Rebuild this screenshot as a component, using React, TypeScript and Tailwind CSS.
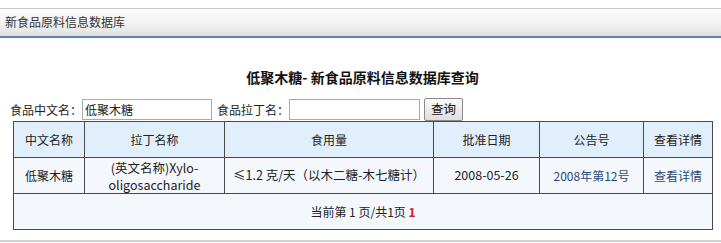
export default function App() {
    const font = { fontFamily: '"Noto Sans CJK SC", "Noto Sans", sans-serif' }

    return (
        <div className="w-[721px] h-[243px] bg-white text-[12px] text-[#222] overflow-hidden" style={font}>
            {/* Header bar */}
            <div className="pt-[8px]">
                <div className="border-t border-[#c8c8c8] h-[27px] bg-gradient-to-b from-[#fdfdfd] via-[#f4f4f4] to-[#e2e2e2] flex items-center pl-[5px] text-[#333]">
                    新食品原料信息数据库
                </div>
                <div className="h-[1px] bg-[#cfe0f2]" />
                <div className="h-[2px] bg-[#6284ab]" />
            </div>

            {/* Title */}
            <h1 className="mt-[31px] text-center font-bold text-[14px] leading-[16px] text-[#111] pl-[4px]">
                低聚木糖- 新食品原料信息数据库查询
            </h1>

            {/* Search form */}
            <div className="mt-[13px] flex items-center pl-[10px] h-[23px]">
                <span className="w-[72px] leading-none whitespace-nowrap">食品中文名：</span>
                <input
                    defaultValue="低聚木糖"
                    className="w-[130px] h-[21px] border border-[#a9a9a9] px-[2px] text-[12px] outline-none"
                    style={font}
                />
                <span className="ml-[5px] w-[72px] leading-none whitespace-nowrap">食品拉丁名：</span>
                <input
                    className="w-[131px] h-[21px] border border-[#a9a9a9] px-[2px] text-[12px] outline-none"
                    style={font}
                />
                <button
                    className="ml-[4px] w-[39px] h-[23px] border border-[#8a8a8a] rounded-[2px] bg-gradient-to-b from-[#fbfbfb] to-[#dedede] text-[12.5px] text-[#111] leading-none"
                    style={font}
                >
                    查询
                </button>
            </div>

            {/* Result table */}
            <div className="pl-[13px]">
                <table className="border-collapse border border-[#4a4a4a] text-center text-[#222]">
                    <colgroup>
                        <col className="w-[71px]" />
                        <col className="w-[140px]" />
                        <col className="w-[209px]" />
                        <col className="w-[106px]" />
                        <col className="w-[104px]" />
                        <col className="w-[69px]" />
                    </colgroup>
                    <thead>
                        <tr className="h-[36px] bg-[#e1eefb]">
                            <th className="border border-[#4a4a4a] font-normal">中文名称</th>
                            <th className="border border-[#4a4a4a] font-normal">拉丁名称</th>
                            <th className="border border-[#4a4a4a] font-normal">食用量</th>
                            <th className="border border-[#4a4a4a] font-normal">批准日期</th>
                            <th className="border border-[#4a4a4a] font-normal">公告号</th>
                            <th className="border border-[#4a4a4a] font-normal">查看详情</th>
                        </tr>
                    </thead>
                    <tbody>
                        <tr className="h-[36px] bg-[#f4f8fd]">
                            <td className="border border-[#4a4a4a]">低聚木糖</td>
                            <td className="border border-[#4a4a4a] leading-[17px] text-[12.5px] py-0">
                                (英文名称)Xylo-
                                <br />
                                oligosaccharide
                            </td>
                            <td className="border border-[#4a4a4a] text-[12.5px]">≤1.2 克/天（以木二糖-木七糖计）</td>
                            <td className="border border-[#4a4a4a] text-[12.5px]">2008-05-26</td>
                            <td className="border border-[#4a4a4a] text-[#2b4a78]">2008年第12号</td>
                            <td className="border border-[#4a4a4a] text-[#2b4a78]">查看详情</td>
                        </tr>
                        <tr className="h-[36px] bg-[#f4f8fd]">
                            <td colSpan={6} className="border border-[#4a4a4a]">
                                当前第 1 页/共1页 <span className="font-bold text-[#d0202a]">1</span>
                            </td>
                        </tr>
                    </tbody>
                </table>
            </div>

            {/* Bottom rule */}
            <div className="mt-[10px] h-[2px] bg-[#d0d0d0]" />
        </div>
    )
}
